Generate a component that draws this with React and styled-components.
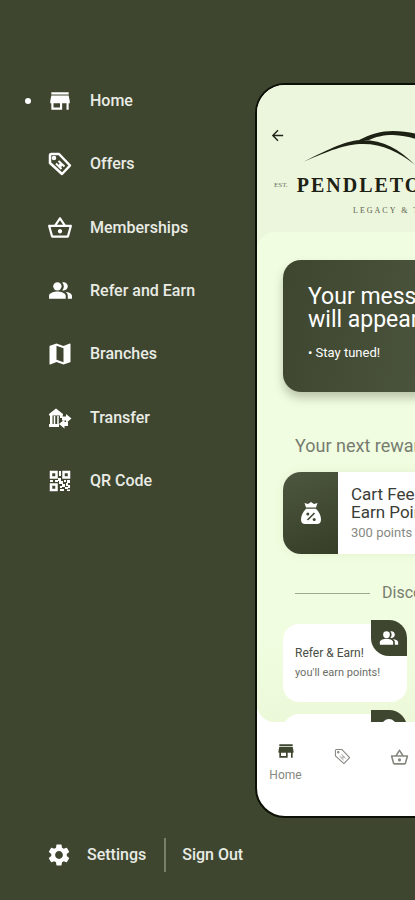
import React from "react"
import { useState } from "react"
import styled, { createGlobalStyle, ThemeProvider } from "styled-components";
import {
  MdStoreMallDirectory,
  MdOutlineShoppingBasket,
  MdPeopleAlt,
  MdMap,
  MdSettings,
  MdArrowBack,
} from "react-icons/md";

const theme = {
  olive: "#3e462f",
  oliveLight: "#4d563e",
  cream: "#ecf6dc",
  mint: "#f1fde0",
  mintDark: "#e8f5d3",
  white: "#ffffff",
  text_menu: "#e9ebe5",
  text_dark: "#3a3d36",
  text_muted: "#777c70",
};

const GlobalStyle = createGlobalStyle`
  * {
    box-sizing: border-box;
  }
  body {
    margin: 0;
    background: ${theme.olive};
    font-family: Roboto, "Liberation Sans", sans-serif;
  }
  button {
    font: inherit;
    color: inherit;
    background: none;
    border: 0;
    padding: 0;
    cursor: pointer;
  }
  a {
    color: inherit;
    text-decoration: none;
  }
  h1, h2, h3, p {
    margin: 0;
    font-weight: 400;
  }
  svg {
    display: block;
    flex: none;
  }
`;

const Page = styled.div`
  display: flex;
  min-height: 100vh;
  overflow: hidden;
  background: ${({ theme }) => theme.olive};
`;

const Drawer = styled.aside`
  display: flex;
  flex: none;
  flex-direction: column;
  justify-content: space-between;
  width: 255px;
  padding: 69px 0 28px 24px;
  color: ${({ theme }) => theme.text_menu};
  font-size: 16px;
  font-weight: 500;
  line-height: 24px;
`;

const Menu = styled.nav`
  display: grid;
  grid-auto-rows: 1fr;
  height: 444px;
`;

const MenuLink = styled.a`
  display: grid;
  grid-template-columns: 22px 28px 1fr;
  align-items: center;
  white-space: nowrap;

  svg {
    justify-self: center;
    color: ${({ theme }) => theme.white};
  }

  span {
    padding-left: 16px;
  }

  &::before {
    content: "";
    width: 6px;
    height: 6px;
    margin-left: 1px;
    border-radius: 50%;
    background: ${({ $active, theme }) => ($active ? theme.white : "transparent")};
  }
`;

const Footer = styled.div`
  display: flex;
  align-items: center;
  gap: 16px;
  height: 34px;
  padding-left: 22px;
  white-space: nowrap;
`;

const FooterButton = styled.button`
  display: flex;
  align-items: center;
  gap: 15px;
`;

const FooterLine = styled.div`
  width: 2px;
  height: 34px;
  margin-left: 2px;
  background: #77806a;
`;

const Phone = styled.main`
  display: flex;
  flex: none;
  flex-direction: column;
  align-self: flex-start;
  width: 362px;
  margin-top: 83px;
  border: 2px solid #0d1006;
  border-radius: 30px;
  overflow: hidden;
  background: ${({ theme }) => theme.white};
`;

const Screen = styled.div`
  height: 637px;
  overflow: hidden;
  border-radius: 0 0 18px 18px;
  background: ${({ theme }) => theme.cream};
`;

const Header = styled.header`
  display: flex;
  flex-direction: column;
  height: 147px;
  padding: 42px 12px 0;
`;

const HeaderTop = styled.div`
  display: flex;
  align-items: flex-start;
  gap: 17px;
  height: 42px;
`;

const BackButton = styled.button`
  flex: none;
  color: #22261a;
`;

const Hills = styled.svg`
  margin-top: 4px;
  color: #1d2113;
`;

const Brand = styled.div`
  display: flex;
  align-items: center;
  gap: 9px;
  height: 32px;
  padding-left: 5px;
  font-family: "Liberation Serif", serif;
  white-space: nowrap;
`;

const Est = styled.span`
  color: #6b7060;
  font-size: 7px;
`;

const BrandName = styled.span`
  color: #1d2113;
  font-size: 20px;
  font-weight: 700;
  letter-spacing: 2px;
`;

const Tagline = styled.div`
  margin-top: 4px;
  padding-left: 84px;
  color: #5b614f;
  font-family: "Liberation Serif", serif;
  font-size: 8px;
  line-height: 12px;
  letter-spacing: 2px;
  white-space: nowrap;
`;

const Body = styled.div`
  padding: 28px 26px 0;
  border-radius: 18px 18px 0 0;
  background: linear-gradient(${({ theme }) => theme.mint} 72%, ${({ theme }) => theme.mintDark});
`;

const MessageCard = styled.section`
  height: 132px;
  padding: 25px;
  border-radius: 18px;
  background: linear-gradient(100deg, ${({ theme }) => theme.olive}, ${({ theme }) => theme.oliveLight} 60%);
  box-shadow: 0 6px 10px rgba(62, 70, 47, 0.3);
  color: ${({ theme }) => theme.white};
`;

const MessageTitle = styled.h1`
  font-size: 23px;
  line-height: 23px;
`;

const MessageText = styled.p`
  margin-top: 13px;
  font-size: 13px;
  line-height: 18px;
`;

const SectionTitle = styled.h2`
  margin: 43px 0 15px 12px;
  color: ${({ theme }) => theme.text_muted};
  font-size: 18px;
  line-height: 22px;
`;

const RewardCard = styled.section`
  display: flex;
  height: 82px;
  border-radius: 18px;
  overflow: hidden;
  background: ${({ theme }) => theme.white};
  box-shadow: 0 0 10px rgba(120, 150, 80, 0.12);
`;

const RewardIcon = styled.div`
  display: flex;
  align-items: center;
  justify-content: center;
  width: 55px;
  background: linear-gradient(160deg, ${({ theme }) => theme.oliveLight}, #363e28);
  color: ${({ theme }) => theme.white};
`;

const RewardInfo = styled.div`
  padding: 13px;
  color: ${({ theme }) => theme.text_dark};
  white-space: nowrap;
`;

const RewardName = styled.h3`
  font-size: 17px;
  line-height: 18px;
`;

const RewardPoints = styled.p`
  margin-top: 3px;
  color: #888a84;
  font-size: 13px;
  line-height: 18px;
`;

const Discover = styled.div`
  display: flex;
  align-items: center;
  gap: 12px;
  margin: 28px 12px 20px;
  color: ${({ theme }) => theme.text_muted};
  font-size: 16px;
  line-height: 22px;
  white-space: nowrap;

  &::before,
  &::after {
    content: "";
    width: 75px;
    height: 1px;
    background: #a0a890;
  }
`;

const Offers = styled.div`
  display: grid;
  grid-template-columns: repeat(2, 124px);
  gap: 12px;
`;

const OfferCard = styled.article`
  position: relative;
  height: 78px;
  padding: 19px 12px;
  border-radius: 16px;
  background: ${({ theme }) => theme.white};
  color: #6b6e66;
  font-size: 11px;
  line-height: 20px;
  white-space: nowrap;
`;

const OfferName = styled.h3`
  color: #4a4d44;
  font-size: 12px;
  line-height: 20px;
`;

const OfferBadge = styled.div`
  position: absolute;
  top: -4px;
  right: 0;
  display: flex;
  align-items: center;
  justify-content: center;
  width: 36px;
  height: 36px;
  border-radius: 0 18px 0 18px;
  background: ${({ theme }) => theme.olive};
  color: ${({ theme }) => theme.white};
`;

const TabBar = styled.nav`
  display: grid;
  grid-template-columns: repeat(6, 57px);
  height: 94px;
  padding-top: 17px;
`;

const Tab = styled.button`
  display: flex;
  flex-direction: column;
  align-items: center;
  align-self: start;
  gap: 6px;
  padding-top: ${({ $active }) => ($active ? "2px" : "9px")};
  color: ${({ $active, theme }) => ($active ? theme.olive : "#85887f")};

  span {
    color: #85887f;
    font-size: 12px;
    line-height: 16px;
  }
`;

const TagIcon = ({ size = 24, thick = 2 }) => (
  <svg width={size} height={size} viewBox="0 0 24 24" fill="none" stroke="currentColor" strokeWidth={thick} strokeLinejoin="round">
    <path d="M2 3.500Q2 2 3.500 2H11L22 13.500L14 22L2 11Z" />
    <circle cx="6" cy="6" r="1" />
    <path d="M8 11.500L13.500 17M10.500 9L16.500 14.500M11 12.500L14 14" strokeWidth={thick * 0.8} />
  </svg>
);

const TransferIcon = () => (
  <svg width="24" height="24" viewBox="0 0 24 24" fill="currentColor">
    <path d="M1 8L8 2.500L15 8V9.500H1ZM2 9h2.500v9H2zM12 9h2.500v3H12zM1 18h10v3H1z" />
    <path d="M6.500 10v8M10 10v8" fill="none" stroke="currentColor" strokeWidth="1.500" />
    <path d="M14 10.500h4V8l5.500 4.500l-5.500 4.500v-2.500h-4z" />
    <path d="M20 16h-3.500V13.500l-5.500 4.500l5.500 4.500v-2.500H20z" />
  </svg>
);

const QrIcon = () => (
  <svg width="22" height="22" viewBox="0 0 22 22" fill="currentColor">
    <g fill="none" stroke="currentColor" strokeWidth="2.500">
      <rect x="2" y="2" width="5.500" height="5.500" />
      <rect x="14.500" y="2" width="5.500" height="5.500" />
      <rect x="2" y="14.500" width="5.500" height="5.500" />
    </g>
    <path d="M10 1h2v5h-2zM1 10h3v2H1zM6 10h3v2H6zM9 8h3v3h2v3h-4v-3H9zM15 10h2v2h-2zM18 10h3v3h-3zM13 14h3v3h-3zM17 13h2v3h-2zM16 17h3v2h-3zM19 15h2v3h-2zM11 16h2v2h-2zM11 19h4v2h-4zM18 19.500h3v1.500h-3z" />
  </svg>
);

const MoneyBagIcon = () => (
  <svg width="22" height="24" viewBox="0 0 22 24" fill="currentColor">
    <path d="M4.500 2L8 3L11 1L14 3L17.500 2L16 6.500H6Z" />
    <path d="M6 7.800H16C19 11 21 14.500 21 18.500C21 21.500 19.500 23 17 23H5C2.500 23 1 21.500 1 18.500C1 14.500 3 11 6 7.800Z" />
    <path d="M7.500 19L14.500 12" stroke="#3e462f" strokeWidth="1.600" />
    <circle cx="7.800" cy="13" r="1.500" fill="#3e462f" />
    <circle cx="14.200" cy="18.500" r="1.500" fill="#3e462f" />
  </svg>
);

const menuItems = [
  { label: "Home", icon: <MdStoreMallDirectory size={26} /> },
  { label: "Offers", icon: <TagIcon thick={2.5} /> },
  { label: "Memberships", icon: <MdOutlineShoppingBasket size={26} /> },
  { label: "Refer and Earn", icon: <MdPeopleAlt size={25} /> },
  { label: "Branches", icon: <MdMap size={28} /> },
  { label: "Transfer", icon: <TransferIcon /> },
  { label: "QR Code", icon: <QrIcon /> },
];

const App = () => {
  const [active, setActive] = useState("Home");
  return (
    <ThemeProvider theme={theme}>
      <GlobalStyle />
      <Page>
        <Drawer>
          <Menu>
            {menuItems.map((item) => (
              <MenuLink key={item.label} href="#" $active={active === item.label} onClick={() => setActive(item.label)}>
                {item.icon}
                <span>{item.label}</span>
              </MenuLink>
            ))}
          </Menu>
          <Footer>
            <FooterButton>
              <MdSettings size={26} color="#fff" />
              Settings
            </FooterButton>
            <FooterLine />
            <FooterButton>Sign Out</FooterButton>
          </Footer>
        </Drawer>
        <Phone>
          <Screen>
            <Header>
              <HeaderTop>
                <BackButton aria-label="Back">
                  <MdArrowBack size={17} />
                </BackButton>
                <Hills width="180" height="36" viewBox="0 0 180 36" fill="currentColor">
                  <path d="M0 31C28 17 44 9 60 9C80 9 96 18 112 34C96 21 80 13 60 13C42 13 26 20 0 31Z" />
                  <path d="M56 9C68 3 78 0 90 0C125 0 145 18 180 32C140 24 122 5 90 4C80 4 72 6 66 9Z" />
                </Hills>
              </HeaderTop>
              <Brand>
                <Est>EST.</Est>
                <BrandName>PENDLETON</BrandName>
              </Brand>
              <Tagline>LEGACY &amp; TRADITION</Tagline>
            </Header>
            <Body>
              <MessageCard>
                <MessageTitle>Your messages<br />will appear here</MessageTitle>
                <MessageText>• Stay tuned!</MessageText>
              </MessageCard>
              <SectionTitle>Your next reward</SectionTitle>
              <RewardCard>
                <RewardIcon><MoneyBagIcon /></RewardIcon>
                <RewardInfo>
                  <RewardName>Cart Fee<br />Earn Points</RewardName>
                  <RewardPoints>300 points</RewardPoints>
                </RewardInfo>
              </RewardCard>
              <Discover>Discover</Discover>
              <Offers>
                <OfferCard>
                  <OfferBadge><MdPeopleAlt size={20} /></OfferBadge>
                  <OfferName>Refer &amp; Earn!</OfferName>
                  you'll earn points!
                </OfferCard>
                <OfferCard />
                <OfferCard>
                  <OfferBadge>
                    <svg width="16" height="18" viewBox="0 0 18 22" fill="currentColor">
                      <path d="M9 0a9 9 0 0 1 9 9c0 6-9 13-9 13S0 15 0 9a9 9 0 0 1 9-9z" />
                    </svg>
                  </OfferBadge>
                </OfferCard>
                <OfferCard />
              </Offers>
            </Body>
          </Screen>
          <TabBar>
            <Tab $active><MdStoreMallDirectory size={20} /><span>Home</span></Tab>
            <Tab aria-label="Offers"><TagIcon size={17} thick={1.5} /></Tab>
            <Tab aria-label="Memberships"><MdOutlineShoppingBasket size={19} /></Tab>
          </TabBar>
        </Phone>
      </Page>
    </ThemeProvider>
  )
}

export default App
